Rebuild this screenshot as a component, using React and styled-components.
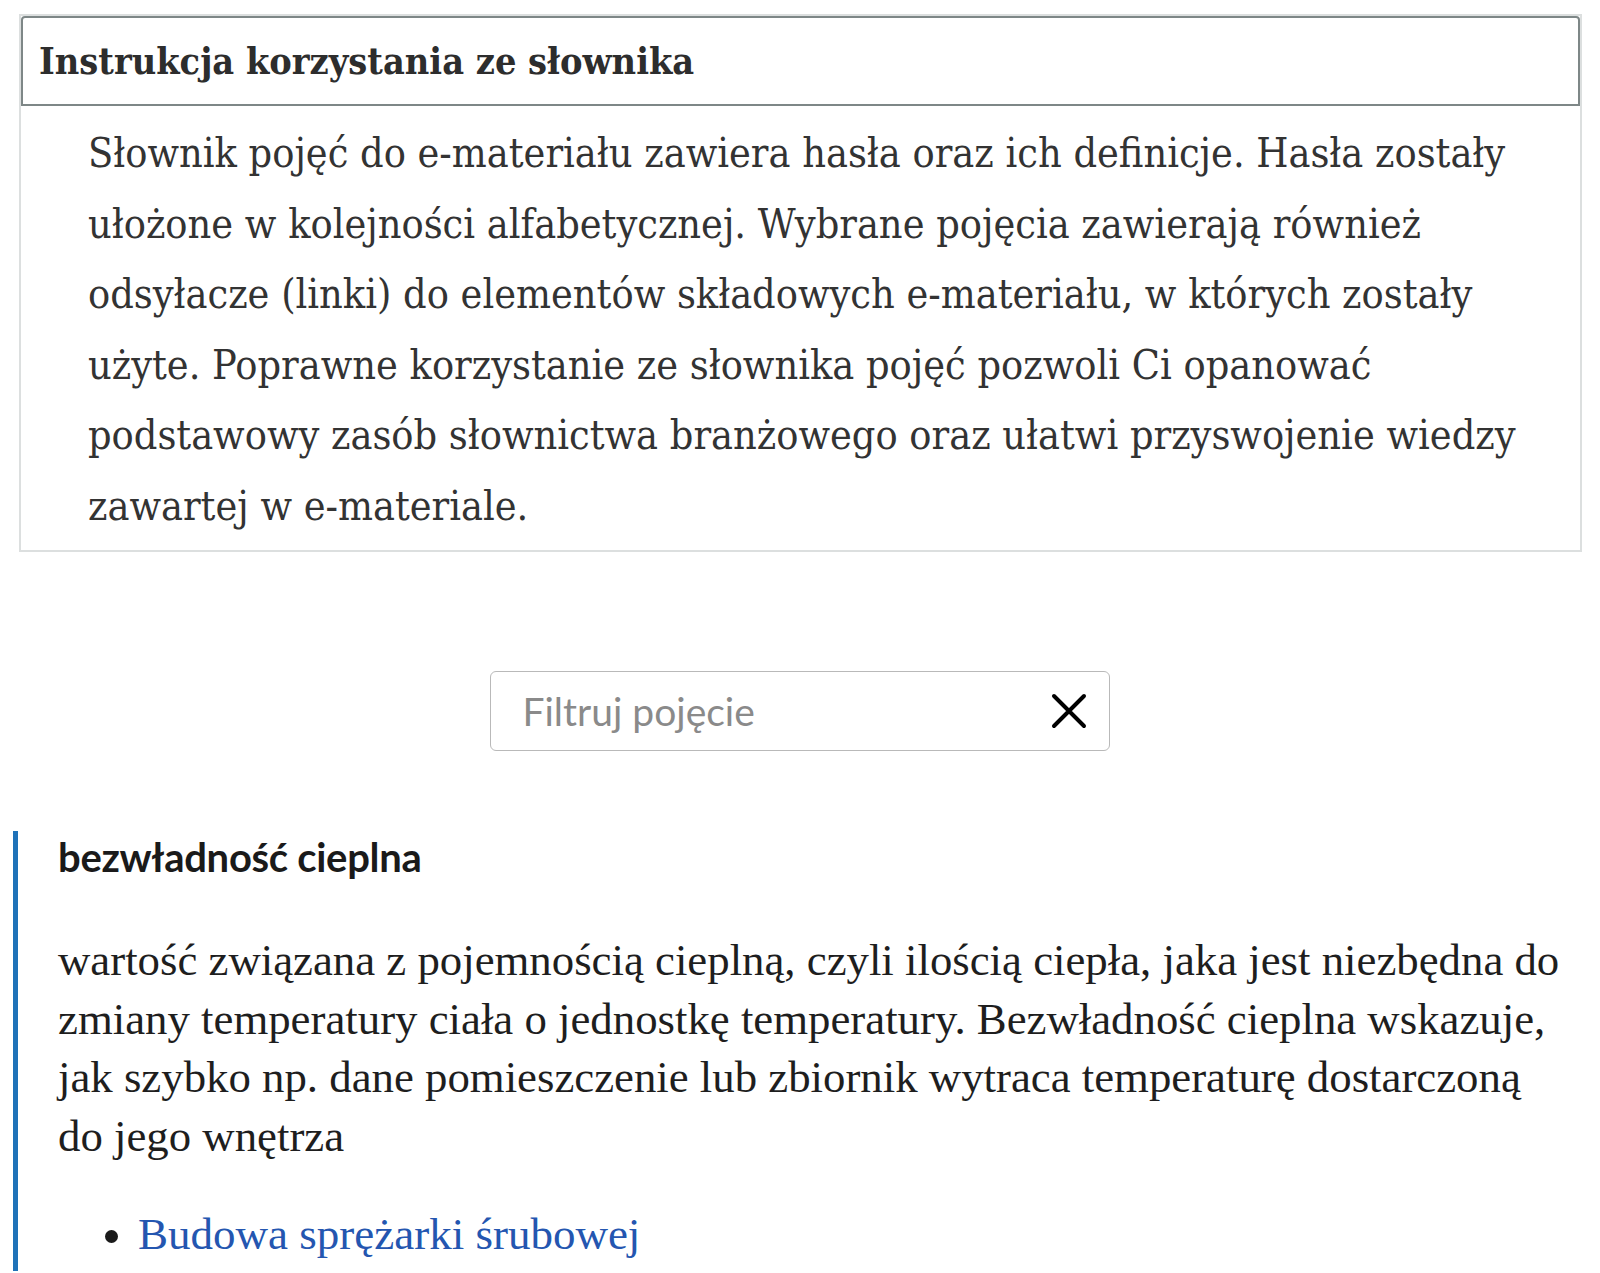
import React from 'react';
import styled, { createGlobalStyle } from 'styled-components';

const GlobalStyle = createGlobalStyle`
  html, body {
    margin: 0;
    padding: 0;
    background: #fff;
  }
  * {
    box-sizing: border-box;
  }
`;

const Page = styled.div`
  padding: 14px 18px 0 13px;
  font-family: 'Lato', 'Noto Sans', sans-serif;
`;

const Details = styled.section`
  margin-left: 6px;
  border: 2px solid #dcdfdf;
`;

const Summary = styled.div`
  display: flex;
  align-items: center;
  height: 90px;
  padding-left: 16px;
  border: 2px solid #7e8787;
  border-radius: 4px 4px 0 0;
  font-family: 'DejaVu Serif Condensed', 'DejaVu Serif', serif;
  font-weight: bold;
  font-size: 37.5px;
  color: #2d2d2d;
`;

const Instruction = styled.p`
  margin: 0;
  padding: 12px 40px 9px 67px;
  font-family: 'DejaVu Serif Condensed', 'DejaVu Serif', serif;
  font-size: 41px;
  line-height: 70.5px;
  color: #333;
`;

const FilterRow = styled.div`
  display: flex;
  justify-content: center;
  margin-top: 119px;
`;

const FilterBox = styled.label`
  display: flex;
  align-items: center;
  justify-content: space-between;
  width: 620px;
  height: 80px;
  padding: 0 22px 0 30px;
  border: 1px solid #b9b9b9;
  border-radius: 6px;
  margin-left: 4px;
`;

const FilterInput = styled.input`
  flex: 1;
  min-width: 0;
  border: none;
  outline: none;
  font-family: 'Lato', sans-serif;
  font-size: 39px;
  color: #333;
  background: transparent;
  &::placeholder {
    color: #8a8a8a;
  }
`;

const ClearButton = styled.button`
  display: flex;
  align-items: center;
  justify-content: center;
  padding: 0;
  border: none;
  background: none;
  cursor: pointer;
`;

const Entry = styled.article`
  margin-top: 80px;
  border-left: 5px solid #1f72b8;
  padding-left: 40px;
  padding-right: 14px;
  padding-bottom: 8px;
`;

const Term = styled.h3`
  margin: 0;
  padding-top: 4px;
  font-family: 'Lato', sans-serif;
  font-weight: bold;
  font-size: 40px;
  line-height: 44px;
  color: #1a1a1a;
  letter-spacing: -0.3px;
`;

const Definition = styled.p`
  margin: 52px 0 0;
  font-family: 'Liberation Serif', serif;
  font-size: 44.8px;
  line-height: 58.7px;
  color: #1e1e1e;
`;

const Links = styled.ul`
  margin: 39px 0 0;
  padding-left: 80px;
  font-family: 'Liberation Serif', serif;
  font-size: 45px;
  line-height: 58px;
`;

const LinkItem = styled.li`
  color: #1a1a1a;
`;

const Link = styled.a`
  color: #2456b0;
  text-decoration: none;
`;

const CloseIcon = () => (
  <svg width="36" height="36" viewBox="0 0 36 36" fill="none">
    <path d="M3 3 L33 33 M33 3 L3 33" stroke="#000" strokeWidth="4" strokeLinecap="round" />
  </svg>
);

export default function App() {
  return (
    <>
      <GlobalStyle />
      <Page>
        <Details>
          <Summary>Instrukcja korzystania ze słownika</Summary>
          <Instruction>
            Słownik pojęć do e-materiału zawiera hasła oraz ich definicje. Hasła zostały ułożone w kolejności
            alfabetycznej. Wybrane pojęcia zawierają również odsyłacze (linki) do elementów składowych
            e-materiału, w których zostały użyte. Poprawne korzystanie ze słownika pojęć pozwoli Ci opanować
            podstawowy zasób słownictwa branżowego oraz ułatwi przyswojenie wiedzy zawartej w e-materiale.
          </Instruction>
        </Details>

        <FilterRow>
          <FilterBox>
            <FilterInput placeholder="Filtruj pojęcie" />
            <ClearButton aria-label="Wyczyść">
              <CloseIcon />
            </ClearButton>
          </FilterBox>
        </FilterRow>

        <Entry>
          <Term>bezwładność cieplna</Term>
          <Definition>
            wartość związana z pojemnością cieplną, czyli ilością ciepła, jaka jest niezbędna do zmiany
            temperatury ciała o jednostkę temperatury. Bezwładność cieplna wskazuje, jak szybko np. dane
            pomieszczenie lub zbiornik wytraca temperaturę dostarczoną do jego wnętrza
          </Definition>
          <Links>
            <LinkItem>
              <Link href="#">Budowa sprężarki śrubowej</Link>
            </LinkItem>
          </Links>
        </Entry>
      </Page>
    </>
  );
}
